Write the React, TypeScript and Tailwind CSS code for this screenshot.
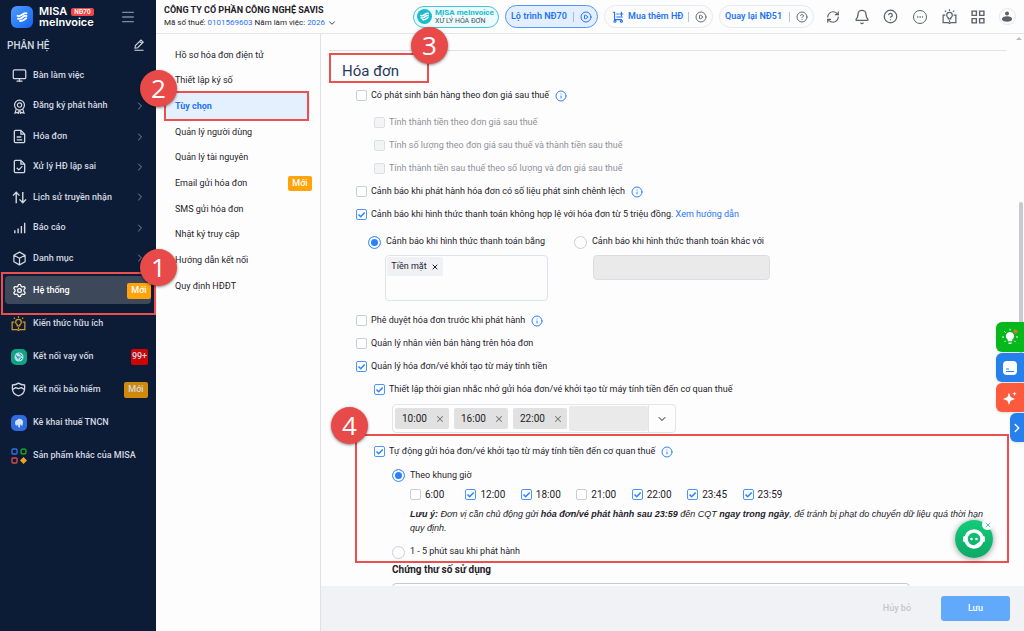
import type { ReactNode } from "react";
import {
  Bell,
  ChevronDown,
  ChevronRight,
  CircleHelp,
  CirclePlay,
  Ellipsis,
  Info,
  Menu,
  Monitor,
  RefreshCw,
  Settings,
  X,
} from "lucide-react";

function BookBulbIcon({ className }: { className: string }) {
  return (
    <svg viewBox="0 0 16 16" fill="none" stroke="currentColor" strokeWidth="1.3" className={className}>
      <path d="M3.6 6.5H1.2v8h5.3l1.5 1 1.5-1h5.3v-8h-2.4" />
      <path d="M6.7 10.6v-1.3C5.3 8.6 5 7.7 5 6.6a3 3 0 0 1 6 0c0 1.1-.3 2-1.7 2.7v1.3zM8 12v2" />
      <path d="M8 .3v1.7M3 1.8l1.2 1.2M13 1.8l-1.2 1.2" />
    </svg>
  );
}

function AwardIcon() {
  return (
    <svg viewBox="0 0 16 16" fill="none" stroke="currentColor" strokeWidth="1.3" className="size-[15px]">
      <circle cx="8" cy="6.5" r="5.3" />
      <circle cx="8" cy="6.5" r="2.3" />
      <path d="M4.5 10.8 3.2 15l2.5-.6 1.2.9.7-3.3M11.5 10.8l1.3 4.2-2.5-.6-1.2.9-.7-3.3" />
    </svg>
  );
}

function DocIcon({ check }: { check?: boolean }) {
  return (
    <svg viewBox="0 0 16 16" fill="none" stroke="currentColor" strokeWidth="1.4" strokeLinecap="round" strokeLinejoin="round" className="size-[15px]">
      <path d="M9.5 1.5H3.7a1.2 1.2 0 0 0-1.2 1.2v10.6a1.2 1.2 0 0 0 1.2 1.2h8.6a1.2 1.2 0 0 0 1.2-1.2V5.5zM9.5 1.5v4h4" />
      {check ? <path d="m5.5 9.8 1.8 1.8 3.3-3.5" /> : <path d="M5.5 8.5h4M5.5 11.5h5" />}
    </svg>
  );
}

function TransferIcon() {
  return (
    <svg viewBox="0 0 16 16" fill="none" stroke="currentColor" strokeWidth="1.5" className="size-[15px]">
      <path d="M4.5 14V2.5M1 6l3.500-3.500L8 6M11.500 2v11.500M8 10l3.500 3.500L15 10" />
    </svg>
  );
}

function BarsIcon() {
  return (
    <svg viewBox="0 0 16 16" stroke="currentColor" strokeWidth="1.5" className="size-[15px]">
      <path d="M3 11v3M6.5 9v5M10 6.5V14M13.5 3v11" />
    </svg>
  );
}

function CubeIcon() {
  return (
    <svg viewBox="0 0 16 16" fill="none" stroke="currentColor" strokeWidth="1.3" strokeLinejoin="round" className="size-[15px]">
      <path d="m8 1.2 6 3.300v7L8 14.800l-6-3.300v-7zM2 4.500l6 3.300 6-3.300M8 7.800v7" />
    </svg>
  );
}

function LoanIcon() {
  return (
    <svg viewBox="0 0 16 16" className="size-4">
      <rect width="16" height="16" rx="5" fill="#12a182" />
      <circle cx="8" cy="8" r="4.5" fill="#b9e4ea" />
      <path d="m5 6.2 2.5 4M8 4.2l3 3M8.8 11l2.2-2M6.5 8h3.2" stroke="#12839b" strokeWidth="1" fill="none" />
    </svg>
  );
}

function ShieldIcon() {
  return (
    <svg viewBox="0 0 16 16" fill="none" stroke="currentColor" strokeWidth="1.4" strokeLinejoin="round" className="size-[15px]">
      <path d="M8 1.2c2 1.3 4 1.9 6.5 2v4c0 3.8-2.7 6.4-6.5 7.6C4.2 13.6 1.5 11 1.5 7.2v-4c2.5-.1 4.5-.7 6.500-2z" />
      <path d="M1.7 8 5 6l3 1 3-1 3.300 2" />
    </svg>
  );
}

function TaxIcon() {
  return (
    <svg viewBox="0 0 16 16" className="size-4">
      <rect width="16" height="16" rx="5" fill="#2c6be0" />
      <path d="M4 8c0-2 1-3 2.2-3 .6-1.2 2-1.5 3-1 1.6 0 2.8 1.4 2.8 3l-.5 3.5H10l-.4-2-.8 4H7.4L7 9.5l-1 1.3L4.5 10z" fill="#d5e3fb" />
    </svg>
  );
}

function ProductsIcon() {
  return (
    <svg viewBox="0 0 16 16" fill="none" strokeWidth="1.4" className="size-4">
      <rect x="1" y="1" width="5" height="5" rx="1" stroke="#2f6fe4" />
      <rect x="10" y="1" width="5" height="5" rx="2" stroke="#17a51f" />
      <rect x="1" y="10" width="5" height="5" rx="1" stroke="#d9474a" />
      <path d="m12.5 10 2.5 2.5-2.5 2.5-2.5-2.5z" fill="#f2a31d" stroke="#f2a31d" />
    </svg>
  );
}

function SwooshLogo({ className }: { className: string }) {
  return (
    <svg viewBox="0 0 22 22" fill="none" stroke="white" strokeWidth="2.3" strokeLinecap="round" className={className}>
      <path d="M5.5 9.5c2 1.5 4 0 6-1.5s3-2.5 5-1.5M6 13c2.5 1 4-.5 6-2s3-2 4.5-1.200M8.500 15.800c2.500.5 5.500-1.500 7.500-3.300" />
    </svg>
  );
}

function CartIcon() {
  return (
    <svg viewBox="0 0 14 14" fill="none" stroke="currentColor" strokeWidth="1.3" className="size-3">
      <path d="M1 1.5h2V10h8.5M5 3.5h3M5 7h7.5M11 1v5M8.7 3.5h4.5" />
      <circle cx="3.5" cy="12" r="1.2" />
      <circle cx="11" cy="12" r="1.2" />
    </svg>
  );
}

const modules = [
  { label: "Bàn làm việc", icon: <Monitor className="size-[15px]" />, arrow: false },
  { label: "Đăng ký phát hành", icon: <AwardIcon />, arrow: true },
  { label: "Hóa đơn", icon: <DocIcon />, arrow: true },
  { label: "Xử lý HĐ lập sai", icon: <DocIcon check />, arrow: true },
  { label: "Lịch sử truyền nhận", icon: <TransferIcon />, arrow: true },
  { label: "Báo cáo", icon: <BarsIcon />, arrow: true },
  { label: "Danh mục", icon: <CubeIcon />, arrow: true },
];

const extras = [
  { label: "Kiến thức hữu ích", icon: <BookBulbIcon className="size-[15px] text-[#d59a26]" /> },
  { label: "Kết nối vay vốn", icon: <LoanIcon />, badge: "99+", badgeClass: "bg-[#cc0606] w-[17px]" },
  { label: "Kết nối bảo hiểm", icon: <ShieldIcon />, badge: "Mới", badgeClass: "bg-[#cf8a0b] w-6" },
  { label: "Kê khai thuế TNCN", icon: <TaxIcon /> },
  { label: "Sản phẩm khác của MISA", icon: <ProductsIcon /> },
];

const settings = [
  "Hồ sơ hóa đơn điện tử",
  "Thiết lập ký số",
  "Tùy chọn",
  "Quản lý người dùng",
  "Quản lý tài nguyên",
  "Email gửi hóa đơn",
  "SMS gửi hóa đơn",
  "Nhật ký truy cập",
  "Hướng dẫn kết nối",
  "Quy định HĐĐT",
];

const slots = [
  { time: "6:00", on: false },
  { time: "12:00", on: true },
  { time: "18:00", on: true },
  { time: "21:00", on: false },
  { time: "22:00", on: true },
  { time: "23:45", on: true },
  { time: "23:59", on: true },
];

function Step({ n, className }: { n: number; className: string }) {
  return (
    <span
      className={`absolute z-30 flex size-[37px] items-center justify-center rounded-full bg-[#e84a4a] font-['Open_Sans',sans-serif] text-[26px] font-normal text-white shadow-[0_1px_3px_rgba(0,0,0,0.5)] ${className}`}
    >
      {n}
    </span>
  );
}

function Frame({ className }: { className: string }) {
  return <span className={`pointer-events-none absolute z-20 border-2 border-[#ec4f4d] ${className}`} />;
}

function Check({
  children,
  checked,
  disabled,
  info,
  className = "h-[23px]",
}: {
  children: ReactNode;
  checked?: boolean;
  disabled?: boolean;
  info?: boolean;
  className?: string;
}) {
  return (
    <div className={`flex items-center whitespace-nowrap ${className}`}>
      <label className={`flex items-center gap-1 ${disabled ? "text-[#8f9196]" : ""}`}>
        <span className="grid">
          <input
            type="checkbox"
            defaultChecked={checked}
            disabled={disabled}
            className="peer size-[11px] appearance-none rounded-[2px] border border-[#c9ced6] bg-white [grid-area:1/1] checked:border-[#4a94fb] disabled:border-[#dcdfe4] disabled:bg-[#f3f4f6]"
          />
          <svg viewBox="0 0 11 11" className="pointer-events-none hidden size-[11px] [grid-area:1/1] peer-checked:block">
            <path d="m2.5 5.5 2.2 2.2 4-4.2" fill="none" stroke="#2b80ff" strokeWidth="1.5" />
          </svg>
        </span>
        <span>{children}</span>
      </label>
      {info && <Info className="ml-1.5 size-3 text-[#2b80ff]" />}
    </div>
  );
}

function Radio({ name, label, checked, className }: { name: string; label: string; checked?: boolean; className: string }) {
  return (
    <label className={`flex items-center gap-[5px] whitespace-nowrap ${className}`}>
      <input
        type="radio"
        name={name}
        defaultChecked={checked}
        className="size-[13px] appearance-none rounded-full border border-[#c9ced6] checked:border-[#4a94fb] checked:bg-[#2b80ff] checked:shadow-[inset_0_0_0_2px_white]"
      />
      {label}
    </label>
  );
}

function Sidebar() {
  return (
    <aside className="flex w-[156px] shrink-0 flex-col bg-[#0d1c36] text-[9px] font-medium text-[#d3d8e0]">
      <div className="flex h-[34px] items-center pl-[11px]">
        <span className="flex size-[22px] items-center justify-center rounded-md bg-gradient-to-br from-[#4d9bff] to-[#1464f0]">
          <SwooshLogo className="size-[18px]" />
        </span>
        <div className="ml-1.5 font-[Inter,sans-serif] text-[11px] leading-[11px] font-semibold text-white">
          <div className="flex items-center gap-1">
            MISA
            <span className="rounded-[2px] bg-[#ec4848] px-[3px] text-[6px] leading-[8px]">NĐ70</span>
          </div>
          <div>meInvoice</div>
        </div>
        <button aria-label="Thu gọn" className="mr-5 ml-auto">
          <Menu className="size-4 text-[#7e8aa0]" />
        </button>
      </div>
      <div className="flex h-[26px] items-center justify-between pr-[11px] pb-1 pl-[7px]">
        <h2 className="text-[10px]">PHÂN HỆ</h2>
        <button aria-label="Chỉnh sửa">
          <svg viewBox="0 0 12 12" fill="none" stroke="currentColor" strokeWidth="1.1" className="size-3">
            <path d="m2 9 .4-2.5L8 1l2.200 2.200-5.500 5.500zM6.700 2.300l2.200 2.200M1.500 11.300h9" />
          </svg>
        </button>
      </div>
      <nav className="grid h-[213px] auto-rows-fr">
        {modules.map((item) => (
          <a key={item.label} href="#" className="flex items-center pt-px pr-2.5 pl-3">
            <span className="w-[21px]">{item.icon}</span>
            {item.label}
            {item.arrow && <ChevronRight className="ml-auto size-3 text-[#7e8aa0]" />}
          </a>
        ))}
      </nav>
      <div className="relative px-[5px] py-[3px]">
        <a href="#" className="flex h-7 items-center rounded bg-[#3e485b] pt-px pl-[7px] text-white">
          <span className="w-[21px]">
            <Settings className="size-[15px]" />
          </span>
          Hệ thống
          <span className="ml-auto flex h-4 w-6 items-center justify-center rounded-[2px] bg-[#ffa40a]">Mới</span>
        </a>
        <Frame className="-top-px right-0 -bottom-2 left-px" />
        <Step n={1} className="-top-6 -right-[21px]" />
      </div>
      {extras.map((item) => (
        <a key={item.label} href="#" className="flex h-[33px] items-center pr-2 pl-[11px]">
          <span className="w-[22px]">{item.icon}</span>
          {item.label}
          {item.badge && (
            <span className={`ml-auto flex h-4 items-center justify-center rounded-[2px] ${item.badgeClass}`}>
              {item.badge}
            </span>
          )}
        </a>
      ))}
    </aside>
  );
}

function Pill({ label, icon, end, className }: { label: string; icon?: ReactNode; end: ReactNode; className: string }) {
  return (
    <button className={`flex h-[23px] shrink-0 items-center rounded-full border px-[5px] text-[9px] font-semibold whitespace-nowrap text-[#1f74f5] ${className}`}>
      {icon}
      {label}
      <span className="ml-auto h-2.5 border-l border-current/40" />
      <span className="ml-1.5">{end}</span>
    </button>
  );
}

function Header() {
  return (
    <header className="flex h-[34px] shrink-0 items-center border-b border-[#e4e6ea] pr-0.5 pl-2">
      <div className="whitespace-nowrap">
        <div className="text-[9px] leading-[12px] font-bold">CÔNG TY CỔ PHẦN CÔNG NGHỆ SAVIS</div>
        <div className="flex items-center gap-0.5 text-[8px] leading-[13px]">
          Mã số thuế:
          <a href="#" className="text-[#1f74f5]">0101569603</a>
          Năm làm việc:
          <a href="#" className="text-[#1f74f5]">2026</a>
          <ChevronDown className="size-2.5" />
        </div>
      </div>
      <div className="ml-auto flex items-center">
        <button className="flex h-[22px] w-[86px] shrink-0 items-center rounded-full border border-[#45c5d6] bg-[#ecfbfd] pl-[3px] whitespace-nowrap">
          <span className="flex size-[15px] shrink-0 items-center justify-center rounded-full bg-[#18bcd0]">
            <SwooshLogo className="size-[15px]" />
          </span>
          <span className="ml-[3px] text-left">
            <span className="block text-[8px] leading-[9px] font-bold text-[#18bcd0]">MISA meInvoice</span>
            <span className="block text-[7px] leading-[8px] text-[#43505f]">XỬ LÝ HÓA ĐƠN</span>
          </span>
        </button>
        <Pill label="Lộ trình NĐ70" end={<CirclePlay className="size-3" />} className="ml-1.5 w-[93px] border-[#4e96fa] bg-[#e3effe]" />
        <Pill
          label="Mua thêm HĐ"
          icon={<span className="mr-1 ml-0.5"><CartIcon /></span>}
          end={<CirclePlay className="size-3 text-[#686c73]" />}
          className="ml-1.5 w-[109px] border-[#e4e8ef]"
        />
        <Pill label="Quay lại NĐ51" end={<CircleHelp className="size-3 text-[#686c73]" />} className="ml-1.5 w-[95px] border-[#e4e8ef]" />
        <div className="ml-1 grid w-[204px] shrink-0 grid-cols-7 place-items-center text-[#5c6169]">
          <button aria-label="Làm mới"><RefreshCw className="size-3.5" /></button>
          <button aria-label="Thông báo"><Bell className="size-4" /></button>
          <button aria-label="Trợ giúp"><CircleHelp className="size-[15px]" /></button>
          <button aria-label="Thêm" className="flex size-3.5 items-center justify-center rounded-full border border-current">
            <Ellipsis className="size-2" />
          </button>
          <button aria-label="Kiến thức"><BookBulbIcon className="size-[15px]" /></button>
          <button aria-label="Ứng dụng">
            <svg viewBox="0 0 13 13" fill="none" stroke="currentColor" strokeWidth="1.3" className="size-3.5">
              <path d="M1 1h4v4H1zM8 1h4v4H8zM1 8h4v4H1zM8 8h4v4H8z" />
            </svg>
          </button>
          <button aria-label="Tài khoản" className="flex size-[17px] items-center justify-center rounded-full border border-[#e4e6ea]">
            <svg viewBox="0 0 12 12" fill="currentColor" className="size-3">
              <circle cx="6" cy="2.5" r="2" />
              <ellipse cx="6" cy="8" rx="5.2" ry="2.8" />
            </svg>
          </button>
        </div>
      </div>
    </header>
  );
}

function SettingsNav() {
  return (
    <nav className="w-[165px] shrink-0 border-r border-[#dfe1e5] pt-2">
      <div className="grid h-[257px] auto-rows-fr">
        {settings.map((label) => {
          const active = label === "Tùy chọn";
          return (
            <a
              key={label}
              href="#"
              className={`relative mr-[10px] ml-2 flex items-center rounded pt-px pl-[11px] text-[9px] ${active ? "bg-[#e4f0fd] font-bold text-[#1f74f5]" : ""}`}
            >
              {label}
              {label === "Email gửi hóa đơn" && (
                <span className="ml-auto -mr-0.5 flex h-[15px] w-6 items-center justify-center rounded-[2px] bg-[#ffa40a] font-medium text-white">
                  Mới
                </span>
              )}
              {active && (
                <>
                  <Frame className="-top-0.5 right-px -bottom-0.5 left-0" />
                  <Step n={2} className="-top-[23px] -left-6" />
                </>
              )}
            </a>
          );
        })}
      </div>
    </nav>
  );
}

function TimeTag({ time }: { time: string }) {
  return (
    <span className="flex h-[21px] w-[54px] items-center justify-between rounded-[2px] bg-[#e1e1e1] pr-1 pl-[7px] text-[10px]">
      {time}
      <button aria-label={`Xóa ${time}`} className="flex"><X className="size-2.5 text-[#777]" strokeWidth={2.5} /></button>
    </span>
  );
}

function InvoiceOptions() {
  return (
    <section className="min-w-0 flex-1 pt-4 text-[9px]">
      <div className="relative mr-[18px] ml-2 h-[34px] border-t border-[#dfe1e5] pt-2.5 pl-[13px]">
        <h1 className="text-[15px] leading-[20px] text-[#26395c]">Hóa đơn</h1>
        <Frame className="top-0.5 left-0 h-[30px] w-[100px]" />
        <Step n={3} className="-top-6 left-[82px]" />
      </div>
      <div className="pl-[35px]">
        <Check info>Có phát sinh bán hàng theo đơn giá sau thuế</Check>
        <div className="mt-1 pl-[18px]">
          <Check disabled>Tính thành tiền theo đơn giá sau thuế</Check>
          <Check disabled>Tính số lượng theo đơn giá sau thuế và thành tiền sau thuế</Check>
          <Check disabled>Tính thành tiền sau thuế theo số lượng và đơn giá sau thuế</Check>
        </div>
        <Check info>Cảnh báo khi phát hành hóa đơn có số liệu phát sinh chênh lệch</Check>
        <Check checked>
          Cảnh báo khi hình thức thanh toán không hợp lệ với hóa đơn từ 5 triệu đồng.{" "}
          <a href="#" className="text-[#1f74f5]">Xem hướng dẫn</a>
        </Check>
        <div className="mt-1 flex gap-[26px] pl-3">
          <div className="w-[180px]">
            <Radio name="payment" label="Cảnh báo khi hình thức thanh toán bằng" checked className="h-6" />
            <div className="mt-px ml-[17px] h-[46px] rounded border border-[#dfe4ec] p-px">
              <span className="flex h-[19px] w-[56px] items-center justify-center gap-1 rounded-[2px] bg-[#f0f1f5]">
                Tiền mặt
                <button aria-label="Xóa Tiền mặt"><X className="size-2" strokeWidth={3} /></button>
              </span>
            </div>
          </div>
          <div className="w-[196px]">
            <Radio name="payment" label="Cảnh báo khi hình thức thanh toán khác với" className="h-6" />
            <input aria-label="Hình thức thanh toán khác" disabled className="mt-px ml-[19px] block h-[25px] w-[177px] rounded border border-[#dadee3] bg-[#eaeaea]" />
          </div>
        </div>
        <div className="mt-2">
          <Check info>Phê duyệt hóa đơn trước khi phát hành</Check>
          <Check>Quản lý nhân viên bán hàng trên hóa đơn</Check>
          <Check checked>Quản lý hóa đơn/vé khởi tạo từ máy tính tiền</Check>
        </div>
        <div className="pl-[18px]">
          <Check checked>Thiết lập thời gian nhắc nhở gửi hóa đơn/vé khởi tạo từ máy tính tiền đến cơ quan thuế</Check>
          <div className="mt-[3px] ml-[18px] flex h-[29px] w-[284px] items-center gap-[5px] rounded border border-[#e2e5ea] pl-0.5">
            <TimeTag time="10:00" />
            <TimeTag time="16:00" />
            <TimeTag time="22:00" />
            <div className="-ml-[3px] flex h-full flex-1 items-center">
              <input aria-label="Thêm giờ" disabled className="h-[25px] w-[79px] rounded-[2px] bg-[#eaeaea]" />
              <button aria-label="Chọn giờ" className="flex h-full flex-1 items-center justify-center border-l border-[#e2e5ea]">
                <ChevronDown className="size-3" />
              </button>
            </div>
          </div>
        </div>
      </div>
      <div className="relative mt-px mr-[15px] ml-[34px] pt-1.5 pb-0.5 pl-[19px]">
        <Frame className="inset-0" />
        <Step n={4} className="-top-[27px] -left-6" />
        <Check checked info>Tự động gửi hóa đơn/vé khởi tạo từ máy tính tiền đến cơ quan thuế</Check>
        <div className="pl-[18px]">
          <Radio name="schedule" label="Theo khung giờ" checked className="mt-px h-[23px]" />
          <div className="pl-[18px]">
            <div className="grid w-[388px] grid-cols-7 text-[10px]">
              {slots.map((slot) => (
                <Check key={slot.time} checked={slot.on} className="h-3.5">{slot.time}</Check>
              ))}
            </div>
            <p className="mt-1.5 font-['Liberation_Sans',sans-serif] leading-[14px] whitespace-nowrap italic">
              <b>Lưu ý:</b> Đơn vị cần chủ động gửi <b>hóa đơn/vé phát hành sau 23:59</b> đến CQT <b>ngay trong ngày</b>, để
              tránh bị phạt do chuyển dữ liệu quá thời hạn
              <br />
              quy định.
            </p>
          </div>
          <Radio name="schedule" label="1 - 5 phút sau khi phát hành" className="mt-2 h-[18px]" />
        </div>
      </div>
      <div className="pl-[71px]">
        <label htmlFor="certificate" className="block text-[10px] leading-[14px] font-bold">Chứng thư số sử dụng</label>
        <input id="certificate" className="mt-1.5 block h-7 w-[518px] rounded border border-[#c5c9d0]" />
      </div>
    </section>
  );
}

function FloatingTools() {
  return (
    <div className="absolute top-[322px] right-0 z-30 flex flex-col items-end gap-px text-white">
      <button aria-label="Gợi ý" className="flex h-[30px] w-7 items-center justify-center rounded-l-md bg-[#06b81b] shadow">
        <svg viewBox="0 0 18 18" fill="white" stroke="white" className="size-[18px]">
          <path d="M9 4a4 4 0 0 0-2.5 7.2l.5 2h4l.5-2A4 4 0 0 0 9 4zM7.5 14.5h3V16h-3z" stroke="none" />
          <path d="M9 .8v1.7M3.3 3.3l1.3 1.3M1 9h2M15 9h2M3.5 14l1.2-1.2M14.5 14l-1.2-1.2" />
          <circle cx="14.5" cy="3.5" r="1.8" fill="#ef6a38" stroke="#c98232" strokeWidth=".6" />
        </svg>
      </button>
      <button aria-label="Tin nhắn" className="flex h-[29px] w-7 items-center justify-center rounded-l-md bg-[#2680eb] shadow">
        <svg viewBox="0 0 14 14" className="size-3.5">
          <rect width="14" height="14" rx="4" fill="white" />
          <path d="M3 8h3M3 10.5h8" stroke="#2680eb" strokeWidth="1.2" />
        </svg>
      </button>
      <button aria-label="Trợ lý AI" className="flex h-[29px] w-7 items-center justify-center rounded-l-md bg-[#fb5a3c] shadow">
        <svg viewBox="0 0 14 14" fill="white" className="size-3.5">
          <path d="M6 1.5 7.600 6 12 8 7.600 9.800 6 14 4.400 9.800 0 8l4.400-2zM11.500.500l.6 1.600 1.600.6-1.600.6-.6 1.600-.6-1.600-1.600-.6 1.600-.6z" />
        </svg>
      </button>
      <button aria-label="Mở rộng" className="flex h-[29px] w-3.5 items-center justify-center rounded-l-md bg-[#2680eb] shadow">
        <ChevronRight className="size-3.5" strokeWidth={2.5} />
      </button>
    </div>
  );
}

function ChatBot() {
  return (
    <div className="absolute right-[31px] bottom-[73px] z-30 size-[38px]">
      <button aria-label="Trợ lý" className="flex size-full items-center justify-center rounded-full bg-gradient-to-b from-[#12cc7a] to-[#0fa866] shadow-[0_1px_6px_rgba(0,0,0,0.4)]">
        <svg viewBox="0 0 24 24" className="size-6">
          <circle cx="12" cy="12" r="8" fill="none" stroke="white" strokeWidth="3.5" />
          <rect x="1" y="9" width="3" height="6" rx="1.5" fill="white" />
          <rect x="20" y="9" width="3" height="6" rx="1.5" fill="white" />
          <path d="M12 18.5h6v-4z" fill="white" />
          <circle cx="9.5" cy="12" r="1.3" fill="white" />
          <circle cx="14.5" cy="12" r="1.3" fill="white" />
        </svg>
      </button>
      <button aria-label="Đóng" className="absolute -top-px right-0 flex size-[11px] items-center justify-center rounded-full bg-white text-[#1c9c8b]">
        <X className="size-2" />
      </button>
    </div>
  );
}

export default function App() {
  return (
    <div className="relative flex h-screen overflow-hidden bg-[#fdfdfe] font-[Roboto,'Liberation_Sans',sans-serif] text-[#1f2229]">
      <Sidebar />
      <div className="flex min-w-0 flex-1 flex-col">
        <Header />
        <main className="flex min-h-0 flex-1">
          <SettingsNav />
          <div className="flex min-w-0 flex-1 flex-col">
            <div className="flex min-h-0 flex-1">
              <InvoiceOptions />
            </div>
            <footer className="relative z-10 flex h-[45px] shrink-0 items-center justify-end gap-[30px] bg-[#f1f2f6] pr-3.5 text-[9px]">
              <button className="font-medium text-[#c4c6ca]">Hủy bỏ</button>
              <button className="h-[25px] w-[69px] rounded-[3px] bg-[#60a9fb] font-medium text-white">Lưu</button>
            </footer>
          </div>
        </main>
      </div>
      {/* scrollbar */}
      <span className="absolute top-[37px] right-0.5 border-x-[3px] border-b-[3px] border-x-transparent border-b-[#b9bcc2]" />
      <span className="absolute top-[202px] right-px h-[151px] w-1 rounded-full bg-[#c8cacf]" />
      <FloatingTools />
      <ChatBot />
    </div>
  );
}
